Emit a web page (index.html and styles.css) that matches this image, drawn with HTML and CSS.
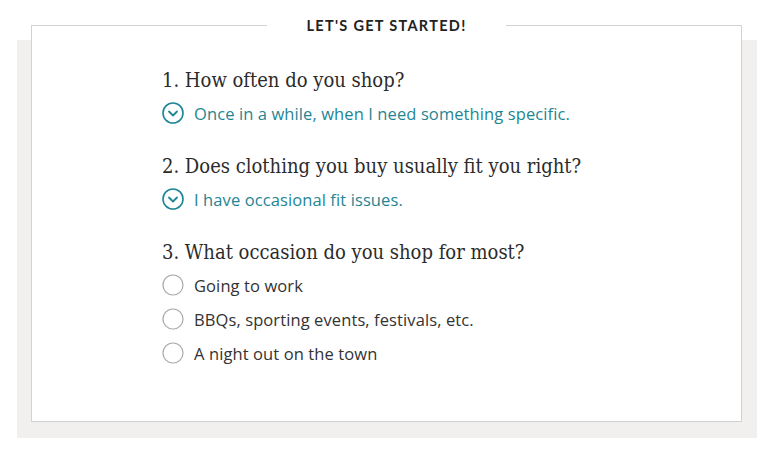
FILE: index.html
```html
<!DOCTYPE html>
<html>
<head>
<meta charset="utf-8">
<link rel="stylesheet" href="styles.css">
</head>
<body>
<div class="panel">
  <div class="card">
    <div class="title"><span>LET'S GET STARTED!</span></div>
    <div class="questions">
      <div class="q">
        <h2 class="q-text">1. How often do you shop?</h2>
        <div class="opt selected">
          <svg class="ico" viewBox="0 0 22 22" width="22" height="22"><circle cx="11" cy="11" r="10" fill="none" stroke="#1d8794" stroke-width="1.6"/><path d="M7 9.5 L11 13.5 L15 9.5" fill="none" stroke="#1d8794" stroke-width="1.8" stroke-linecap="round" stroke-linejoin="round"/></svg>
          <span>Once in a while, when I need something specific.</span>
        </div>
      </div>
      <div class="q">
        <h2 class="q-text">2. Does clothing you buy usually fit you right?</h2>
        <div class="opt selected">
          <svg class="ico" viewBox="0 0 22 22" width="22" height="22"><circle cx="11" cy="11" r="10" fill="none" stroke="#1d8794" stroke-width="1.6"/><path d="M7 9.5 L11 13.5 L15 9.5" fill="none" stroke="#1d8794" stroke-width="1.8" stroke-linecap="round" stroke-linejoin="round"/></svg>
          <span>I have occasional fit issues.</span>
        </div>
      </div>
      <div class="q">
        <h2 class="q-text">3. What occasion do you shop for most?</h2>
        <div class="opt">
          <svg class="ico" viewBox="0 0 22 22" width="22" height="22"><circle cx="11" cy="11" r="10" fill="none" stroke="#aaaaaa" stroke-width="1.2"/></svg>
          <span>Going to work</span>
        </div>
        <div class="opt">
          <svg class="ico" viewBox="0 0 22 22" width="22" height="22"><circle cx="11" cy="11" r="10" fill="none" stroke="#aaaaaa" stroke-width="1.2"/></svg>
          <span>BBQs, sporting events, festivals, etc.</span>
        </div>
        <div class="opt">
          <svg class="ico" viewBox="0 0 22 22" width="22" height="22"><circle cx="11" cy="11" r="10" fill="none" stroke="#aaaaaa" stroke-width="1.2"/></svg>
          <span>A night out on the town</span>
        </div>
      </div>
    </div>
  </div>
</div>
</body>
</html>
```
FILE: styles.css
```css
html, body {
  margin: 0;
  padding: 0;
  background: #ffffff;
}
.panel {
  display: flow-root;
  margin: 40px 0 0 17px;
  width: 740px;
  height: 398px;
  box-sizing: border-box;
  background: #f1f0ee;
  padding: 0 15px 0 14px;
}
.card {
  margin-top: -15px;
  height: 397px;
  box-sizing: border-box;
  background: #ffffff;
  border: 1px solid #d2d2d2;
}
.title {
  display: flex;
  justify-content: center;
  margin-top: -9px;
  height: 18px;
}
.title span {
  background: #ffffff;
  padding: 0 39px;
  font-family: "Lato", "Open Sans", sans-serif;
  font-weight: 700;
  font-size: 14.5px;
  letter-spacing: 1.3px;
  line-height: 18px;
  color: #222222;
}
.questions {
  padding: 30px 0 0 130px;
  display: flex;
  flex-direction: column;
  gap: 21px;
}
.q {
  display: flex;
  flex-direction: column;
}
.q-text {
  margin: 0 0 1px 0;
  font-family: "DejaVu Serif", "Liberation Serif", serif;
  font-stretch: condensed;
  font-weight: 400;
  font-size: 20px;
  line-height: 30px;
  color: #2b2b2b;
}
.opt {
  display: flex;
  align-items: center;
  gap: 10px;
  height: 34px;
  font-family: "Open Sans", "Noto Sans", sans-serif;
  font-size: 16.5px;
  letter-spacing: 0.1px;
  color: #333333;
}
.opt .ico {
  flex: none;
}
.opt.selected {
  color: #1f8593;
}
```
